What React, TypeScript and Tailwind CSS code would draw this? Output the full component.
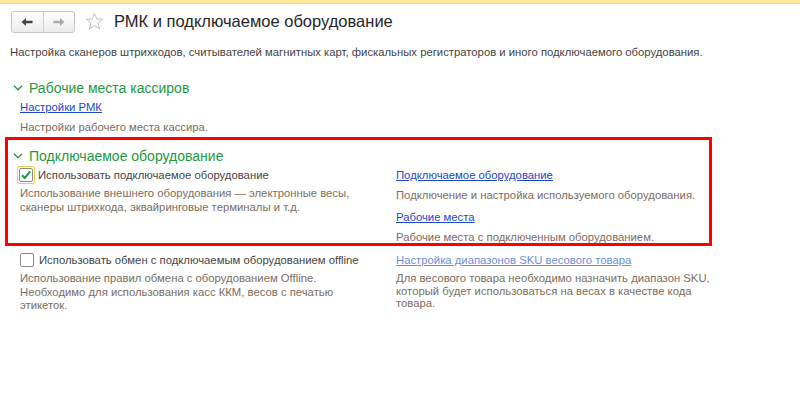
const font = { fontFamily: '"Liberation Sans", Arial, sans-serif' }

function Check({ checked, focused }: { checked?: boolean; focused?: boolean }) {
  return (
    <span
      className={
        'flex h-[18px] w-[18px] shrink-0 items-center justify-center rounded-[2px] border ' +
        (focused ? 'border-[#f2c94c]' : 'border-transparent')
      }
    >
      <span className="flex h-[14px] w-[14px] items-center justify-center rounded-[2px] border border-[#8a8a8a] bg-white">
        {checked && (
          <svg viewBox="0 0 14 14" className="h-[14px] w-[14px]">
            <path d="M2.5 7.2 L5.6 10.4 L11.8 2.8" fill="none" stroke="#1e9a3a" strokeWidth="2.4" />
          </svg>
        )}
      </span>
    </span>
  )
}

function GroupTitle({ children }: { children: React.ReactNode }) {
  return (
    <div className="flex h-[20px] items-center text-[14px] text-[#22993f]">
      <svg viewBox="0 0 10 6" className="ml-[1px] h-[6px] w-[10px]">
        <path d="M1 0.8 L5 4.8 L9 0.8" fill="none" stroke="#22993f" strokeWidth="1.3" />
      </svg>
      <span className="ml-[6px]">{children}</span>
    </div>
  )
}

export default function App() {
  return (
    <div className="h-[399px] w-[800px] overflow-hidden bg-white text-[11.3px] text-[#444]" style={font}>
      {/* top strip */}
      <div className="h-[4px] border-b border-[#e6dcae] bg-[#fce999]" />

      {/* header */}
      <div className="mt-[7px] flex h-[21px] items-center pl-[11px]">
        <div className="flex h-[22px] w-[64px] overflow-hidden rounded-[3px] border border-[#c6c6c6] bg-gradient-to-b from-white to-[#ececec]">
          <span className="flex flex-1 items-center justify-center border-r border-[#d0d0d0]">
            <svg viewBox="0 0 12 10" className="h-[10px] w-[12px]">
              <path d="M0.5 5 L5 1 L5 3.7 L11.5 3.7 L11.5 6.3 L5 6.3 L5 9 Z" fill="#444" />
            </svg>
          </span>
          <span className="flex flex-1 items-center justify-center">
            <svg viewBox="0 0 12 10" className="h-[10px] w-[12px]">
              <path d="M11.5 5 L7 1 L7 3.7 L0.5 3.7 L0.5 6.3 L7 6.3 L7 9 Z" fill="#aaa" />
            </svg>
          </span>
        </div>
        <svg viewBox="0 0 20 20" className="ml-[10px] h-[19px] w-[19px]">
          <path
            d="M10 1.5 L12.4 7.4 L18.6 7.6 L13.8 11.6 L15.4 17.8 L10 14.3 L4.6 17.8 L6.2 11.6 L1.4 7.6 L7.6 7.4 Z"
            fill="none"
            stroke="#bdbdbd"
            strokeWidth="1"
          />
        </svg>
        <span className="ml-[10px] text-[16.5px] text-[#262626]">РМК и подключаемое оборудование</span>
      </div>

      <div className="mt-[13px] pl-[10px] leading-[14px] text-[#444]">
        Настройка сканеров штрихкодов, считывателей магнитных карт, фискальных регистраторов и иного подключаемого
        оборудования.
      </div>

      {/* Рабочие места кассиров */}
      <div className="mt-[19px] pl-[12px]">
        <GroupTitle>Рабочие места кассиров</GroupTitle>
        <div className="pl-[8px] leading-[14px]">
          <a className="mt-[2px] block text-[#1d47c9] underline">Настройки РМК</a>
          <div className="mt-[6px] text-[#7b6e60]">Настройки рабочего места кассира.</div>
        </div>
      </div>

      {/* Подключаемое оборудование */}
      <div className="ml-[5px] mt-[3px] h-[109px] w-[707px] border-[3px] border-[#ff0000] pt-[6px]">
        <div className="pl-[4px]">
          <GroupTitle>Подключаемое оборудование</GroupTitle>
        </div>
        <div className="flex">
          <div className="w-[388px] pl-[9px]">
            <div className="flex h-[18px] items-center gap-[3px]">
              <Check checked focused />
              <span>Использовать подключаемое оборудование</span>
            </div>
            <div className="mt-[3px] pl-[3px] leading-[13.5px] text-[#7b6e60]">
              Использование внешнего оборудования — электронные весы,
              <br />
              сканеры штрихкода, эквайринговые терминалы и т.д.
            </div>
          </div>
          <div className="pt-[2px] leading-[14px]">
            <a className="block text-[#1d47c9] underline">Подключаемое оборудование</a>
            <div className="mt-[6px] text-[#7b6e60]">Подключение и настройка используемого оборудования.</div>
            <a className="mt-[8px] block text-[#1d47c9] underline">Рабочие места</a>
            <div className="mt-[6px] text-[#7b6e60]">Рабочие места с подключенным оборудованием.</div>
          </div>
        </div>
      </div>

      {/* offline */}
      <div className="mt-[5px] flex">
        <div className="w-[396px] pl-[18px]">
          <div className="flex h-[18px] items-center gap-[3px]">
            <Check />
            <span>Использовать обмен с подключаемым оборудованием offline</span>
          </div>
          <div className="mt-[3px] pl-[2px] leading-[13.7px] text-[#7b6e60]">
            Использование правил обмена с оборудованием Offline.
            <br />
            Необходимо для использования касс ККМ, весов с печатью
            <br />
            этикеток.
          </div>
        </div>
        <div className="pt-[2px]">
          <a className="block leading-[14px] text-[#6b8fdc] underline">Настройка диапазонов SKU весового товара</a>
          <div className="mt-[5px] leading-[12.5px] text-[#7b6e60]">
            Для весового товара необходимо назначить диапазон SKU,
            <br />
            который будет использоваться на весах в качестве кода
            <br />
            товара.
          </div>
        </div>
      </div>
    </div>
  )
}
